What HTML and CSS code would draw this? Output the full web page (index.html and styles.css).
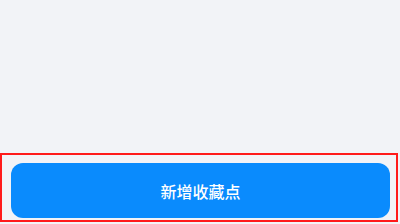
FILE: index.html
```html
<!DOCTYPE html>
<html lang="zh-CN">
<head>
    <meta charset="UTF-8">
    <meta name="viewport" content="width=device-width, initial-scale=1.0">
    <title>新增收藏点</title>
    <link rel="stylesheet" href="styles.css">
</head>
<body>
    <div class="pagina">
        <div class="contenido"></div>
        <div class="pie-resaltado">
            <button type="button" class="btn-agregar">新增收藏点</button>
        </div>
    </div>
</body>
</html>
```

FILE: styles.css
```css
:root {
    --color-fondo: #f2f3f7;
    --color-boton: #0a8bfd;
    --color-marca: #ff1a1a;
}

body {
    font-family: "Noto Sans CJK SC", "Noto Sans", sans-serif;
    background-color: var(--color-fondo);
    margin: 0;
    padding: 0;
}

.pagina {
    width: 400px;
    height: 224px;
    display: flex;
    flex-direction: column;
}

.contenido {
    height: 153px;
}

.pie-resaltado {
    margin-right: 2px;
    border: 2px solid var(--color-marca);
    padding: 8px 6px 2px 9px;
}

.btn-agregar {
    display: block;
    width: 100%;
    height: 55px;
    background-color: var(--color-boton);
    color: #fff;
    border: none;
    border-radius: 12px;
    font-family: inherit;
    font-size: 16px;
    font-weight: 500;
    padding: 0;
    cursor: pointer;
}
```
